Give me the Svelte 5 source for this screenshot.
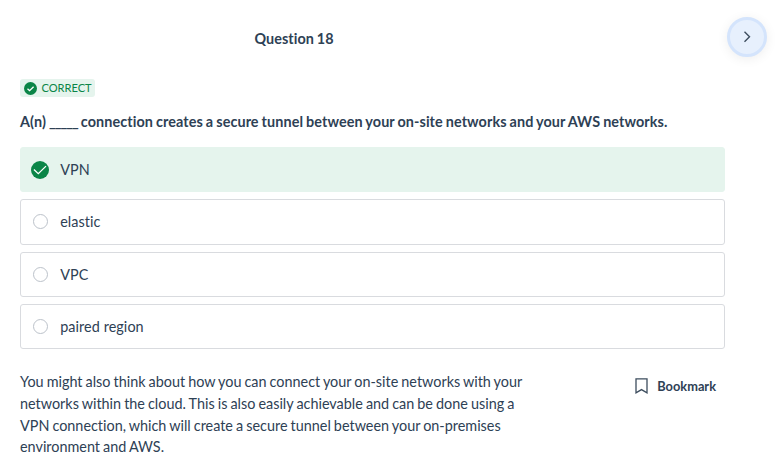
<script>
  const options = [
    { label: 'VPN', correct: true },
    { label: 'elastic' },
    { label: 'VPC' },
    { label: 'paired region' }
  ];
  const lines = [
    'You might also think about how you can connect your on-site networks with your',
    'networks within the cloud. This is also easily achievable and can be done using a',
    'VPN connection, which will create a secure tunnel between your on-premises',
    'environment and AWS.'
  ];
</script>

<main>
  <header>
    <h1>Question 18</h1>
    <button class="next" aria-label="Next question">
      <svg width="10" height="14" viewBox="0 0 10 14"><path d="M2.5 1.8l5 5-5 5" /></svg>
    </button>
  </header>

  <section class="question">
    <div class="badge">
      <svg width="13" height="13" viewBox="0 0 13 13">
        <circle cx="6.5" cy="6.5" r="6.5" />
        <path d="M3.5 6.7l2.1 2 4-4" />
      </svg>
      <span>CORRECT</span>
    </div>
    <h2>A(n) <span class="blank">_____</span> connection creates a secure tunnel between your on-site networks and your AWS networks.</h2>
    <ul>
      {#each options as option}
        <li class:correct={option.correct}>
          <span class="mark">
            {#if option.correct}
              <svg width="18" height="18" viewBox="0 0 18 18">
                <circle cx="9" cy="9" r="9" />
                <path d="M2.9 8.5l4.4 4.2 7.7-7.6" />
              </svg>
            {:else}
              <span class="radio"></span>
            {/if}
          </span>
          <span>{option.label}</span>
        </li>
      {/each}
    </ul>
    <footer>
      <p>{#each lines as line}<span>{line}</span>{/each}</p>
      <button class="bookmark">
        <svg width="13" height="16" viewBox="0 0 13 16"><path d="M1 .8h11v14l-5.5-3.2L1 14.8z" /></svg>
        <span>Bookmark</span>
      </button>
    </footer>
  </section>
</main>

<style>
  :global(body) {
    background: #fff;
  }
  main {
    height: 467px;
    overflow: hidden;
    font-family: Lato, sans-serif;
    font-size: 14.4px;
    font-variant-ligatures: none;
    line-height: 21.6px;
    color: #2e4155;
  }
  h1, h2, p, ul {
    margin: 0;
    padding: 0;
  }
  button {
    padding: 0;
    border: 0;
    background: none;
    font: inherit;
    font-variant-ligatures: none;
    color: inherit;
  }
  header {
    display: flex;
    align-items: center;
    justify-content: space-between;
    height: 40px;
    padding: 17px 14px 22px 254.5px;
  }
  h1 {
    font-size: 14.4px;
    font-weight: 700;
    padding-top: 3px;
    word-spacing: -0.6px;
    letter-spacing: 0.04px;
  }
  .next {
    display: flex;
    align-items: center;
    justify-content: center;
    box-sizing: border-box;
    width: 40px;
    height: 40px;
    border: 3px solid #d4e4fc;
    border-radius: 50%;
    background: #e7f0fd;
    box-shadow: 0 2px 12px rgba(0, 0, 0, 0.07);
  }
  .next path {
    fill: none;
    stroke: #3d4d5e;
    stroke-width: 1.4;
  }
  .question {
    width: 705px;
    padding-left: 20px;
  }
  .badge {
    display: flex;
    align-items: center;
    gap: 4.4px;
    box-sizing: border-box;
    width: 75px;
    height: 18px;
    padding-left: 4px;
    border-radius: 3px;
    background: #e5f4ed;
    color: #0a8547;
    font-size: 11.1px;
    line-height: 18px;
  }
  circle {
    fill: #0a8547;
  }
  .badge path, .mark path {
    fill: none;
    stroke: #fff;
    stroke-width: 1.3;
  }
  h2 {
    padding: 14px 0;
    font-size: 14.4px;
    line-height: 22px;
    font-weight: 700;
    white-space: nowrap;
    word-spacing: -0.6px;
    letter-spacing: 0.085px;
  }
  .blank {
    letter-spacing: -0.95px;
  }
  ul {
    display: grid;
    gap: 7.2px;
    list-style: none;
  }
  li {
    display: flex;
    align-items: center;
    box-sizing: border-box;
    height: 45.2px;
    padding-left: 10px;
    border: 1px solid #d9dbdf;
    border-radius: 3px;
    letter-spacing: 0.07px;
  }
  li.correct {
    border-color: #e5f4ed;
    background: #e5f4ed;
  }
  .mark {
    display: flex;
    align-items: center;
    width: 29.2px;
  }
  .radio {
    box-sizing: border-box;
    width: 15px;
    height: 15px;
    margin-left: 2px;
    border: 1px solid #bcc2ca;
    border-radius: 50%;
  }
  footer {
    display: flex;
    align-items: flex-start;
    justify-content: space-between;
    padding: 22px 9px 0 0;
  }
  p {
    word-spacing: -0.62px;
  }
  p span {
    display: block;
    white-space: nowrap;
  }
  .bookmark {
    display: flex;
    align-items: center;
    gap: 9.5px;
    margin-top: 5px;
    font-size: 12.8px;
    line-height: 20px;
    font-weight: 700;
  }
  .bookmark path {
    fill: none;
    stroke: #3d4d5e;
    stroke-width: 1.3;
  }
</style>
